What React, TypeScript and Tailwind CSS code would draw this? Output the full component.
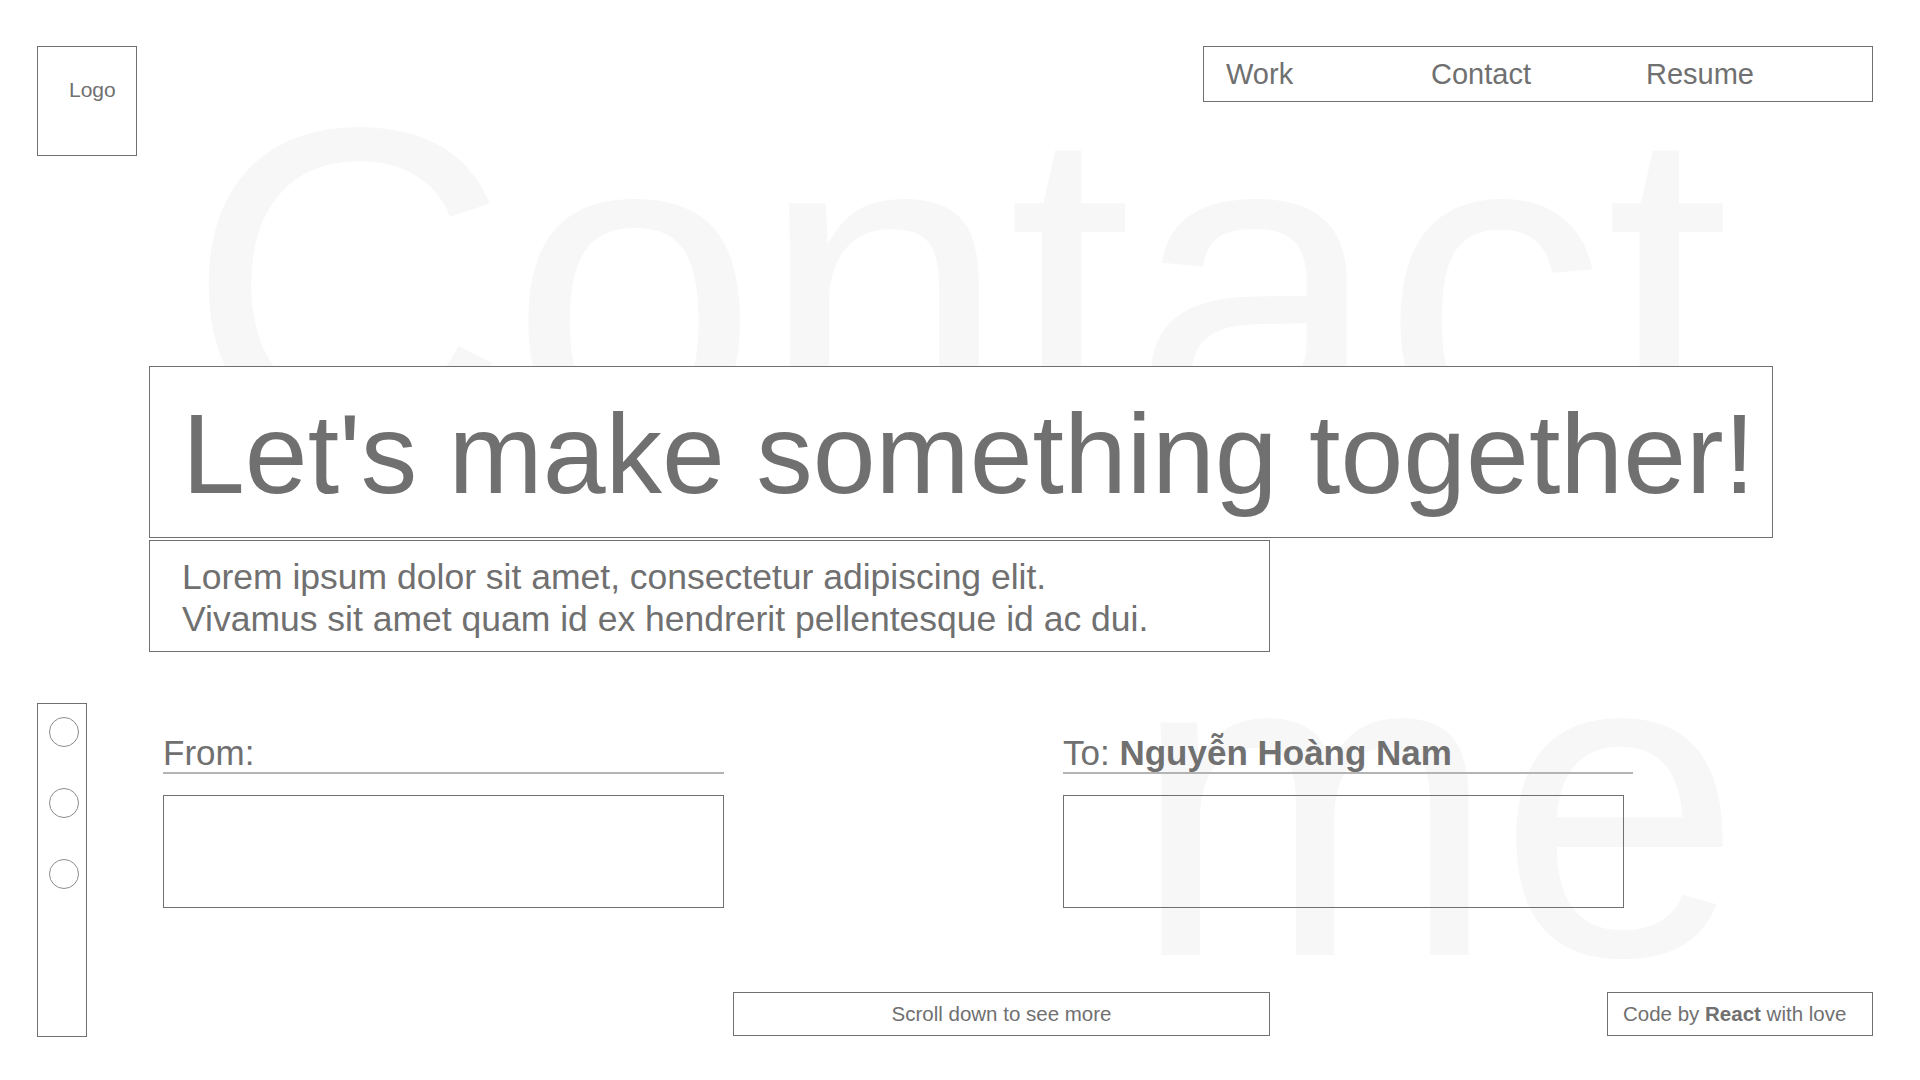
import { FC } from "react";

const navItems = [
  { label: "Work", width: "w-[205px]" },
  { label: "Contact", width: "w-[215px]" },
  { label: "Resume", width: "" },
];

const Sidebar: FC = () => (
  <div className="flex flex-col items-start gap-[41px] w-[50px] h-[334px] border border-[#707070] pt-[13px] pl-[11px] shrink-0">
    <span className="block w-[30px] h-[30px] rounded-full border border-[#8c8c8c]" />
    <span className="block w-[30px] h-[30px] rounded-full border border-[#8c8c8c]" />
    <span className="block w-[30px] h-[30px] rounded-full border border-[#8c8c8c]" />
  </div>
);

export default function App() {
  return (
    <div
      className="relative w-full h-[1080px] overflow-hidden bg-white text-[#707070]"
      style={{ fontFamily: '"Liberation Sans", Arial, Helvetica, sans-serif' }}
    >
      {/* big watermark behind everything */}
      <div className="absolute left-[186px] top-[27px] text-[#f7f7f7] whitespace-nowrap pointer-events-none select-none">
        <div className="text-[448px] leading-[515px]">Contact</div>
        <div className="mt-[3px] pl-[945px] text-[440px] leading-[515px]">me</div>
      </div>

      <div className="relative z-10">
        {/* header */}
        <header className="flex items-start justify-between pt-[46px] pl-[37px] pr-[47px]">
          <div className="w-[100px] h-[110px] border border-[#707070] pl-[31px] pt-[31px] text-[21px] leading-[23px]">
            Logo
          </div>
          <nav className="flex items-center w-[670px] h-[56px] border border-[#707070] pl-[22px] text-[29px]">
            {navItems.map((item) => (
              <a key={item.label} className={`${item.width} leading-none`}>
                {item.label}
              </a>
            ))}
          </nav>
        </header>

        {/* headline */}
        <section className="ml-[149px] mt-[210px]">
          <div className="w-[1624px] h-[172px] border border-[#707070] bg-white pl-[32px] pt-[31px]">
            <h1 className="text-[113px] leading-none whitespace-nowrap">Let's make something together!</h1>
          </div>
          <div className="mt-[2px] w-[1121px] h-[112px] border border-[#707070] bg-white pl-[32px] pt-[15px]">
            <p className="text-[35.5px] leading-[42px] whitespace-nowrap">
              Lorem ipsum dolor sit amet, consectetur adipiscing elit.
              <br />
              Vivamus sit amet quam id ex hendrerit pellentesque id ac dui.
            </p>
          </div>
        </section>

        {/* form + sidebar */}
        <section className="flex items-start mt-[51px] pl-[37px]">
          <Sidebar />
          <div className="ml-[76px] pt-[30px]">
            <div className="flex items-start">
              <div className="w-[561px]">
                <div className="text-[35px] leading-[39px] border-b-2 border-[#b4b4b4]">From:</div>
                <div className="mt-[21px] h-[113px] border border-[#707070]" />
              </div>
              <div className="ml-[339px] w-[570px]">
                <div className="text-[35px] leading-[39px] border-b-2 border-[#b4b4b4] whitespace-nowrap">
                  To: <span className="font-bold">Nguyễn Hoàng Nam</span>
                </div>
                <div className="mt-[21px] w-[561px] h-[113px] border border-[#707070]" />
              </div>
            </div>

            <div className="flex items-center mt-[84px]">
              <div className="ml-[570px] w-[537px] h-[44px] border border-[#707070] flex items-center justify-center text-[20.5px] leading-none">
                Scroll down to see more
              </div>
              <div className="ml-[337px] w-[266px] h-[44px] border border-[#707070] flex items-center pl-[15px] text-[20.5px] leading-none whitespace-nowrap">
                Code by&nbsp;<span className="font-bold">React</span>&nbsp;with love
              </div>
            </div>
          </div>
        </section>
      </div>
    </div>
  );
}
